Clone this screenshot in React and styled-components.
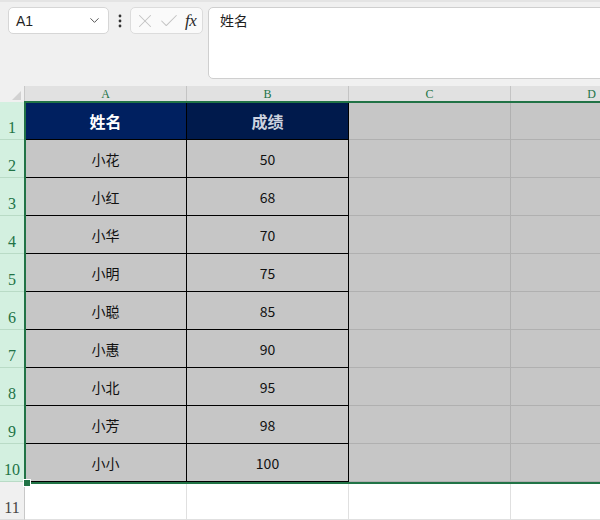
import React from "react";
import styled, { createGlobalStyle } from "styled-components";
import { ChevronDown, X, Check } from "lucide-react";

const GlobalStyle = createGlobalStyle`
  html, body {
    margin: 0;
    padding: 0;
    background: #ffffff;
    overflow: hidden;
  }
  body {
    font-family: "Liberation Sans", "Noto Sans CJK SC", sans-serif;
  }
`;

const GREEN = "#217346";

const Page = styled.div`
  width: 600px;
  height: 520px;
  overflow: hidden;
  background: #fff;
`;

const Toolbar = styled.div`
  height: 86px;
  box-sizing: border-box;
  background: #f0f0f0;
  border-top: 2px solid #e4e4e4;
  padding: 5px 0 0 8px;
  display: flex;
  align-items: flex-start;
`;

const NameBox = styled.div`
  width: 101px;
  height: 27px;
  box-sizing: border-box;
  background: #fff;
  border: 1px solid #d6d6d6;
  border-radius: 5px;
  display: flex;
  align-items: center;
  justify-content: space-between;
  padding: 0 6px 0 7px;
  font-size: 14px;
  color: #1f1f1f;
`;

const Dots = styled.div`
  width: 21px;
  height: 27px;
  display: flex;
  align-items: center;
  justify-content: center;
`;

const FormulaButtons = styled.div`
  width: 73px;
  height: 27px;
  box-sizing: border-box;
  background: #fafafa;
  border: 1px solid #dcdcdc;
  border-radius: 5px;
  display: flex;
  align-items: center;
  padding: 0 3px 0 3px;
  gap: 2px;
`;

const Fx = styled.span`
  font-family: "Liberation Serif", serif;
  font-style: italic;
  font-size: 17px;
  color: #2a2a2a;
  margin-left: 3px;
  letter-spacing: -0.5px;
`;

const FormulaBar = styled.div`
  flex: 1;
  margin-left: 5px;
  margin-right: -10px;
  height: 72px;
  box-sizing: border-box;
  background: #fff;
  border: 1px solid #cfcfcf;
  border-radius: 5px;
  padding: 2px 11px;
  font-family: "Noto Sans CJK SC", sans-serif;
  font-size: 14px;
  color: #1f1f1f;
`;

const Sheet = styled.div`
  position: relative;
  display: grid;
  grid-template-columns: 25px 162px 162px 162px 162px;
  grid-template-rows: 16px repeat(11, 38px);
`;

const Corner = styled.div`
  background: #f0f0f0;
  border-right: 1px solid #c8c8c8;
  position: relative;
  &::after {
    content: "";
    position: absolute;
    right: 3px;
    bottom: 2px;
    border-style: solid;
    border-width: 0 0 9px 9px;
    border-color: transparent transparent #d2d2d2 transparent;
  }
`;

const ColHeader = styled.div`
  background: #e1e1e1;
  border-right: 1px solid #c4c4c4;
  color: ${GREEN};
  font-family: "Liberation Serif", serif;
  font-size: 12px;
  display: flex;
  align-items: flex-end;
  justify-content: center;
  padding-bottom: 0px;
`;

const RowHeader = styled.div`
  background: ${(p) => (p.$selected ? "#d3f0e0" : "#f0f0f0")};
  border-bottom: 1px solid ${(p) => (p.$selected ? "#b9dbc6" : "#dcdcdc")};
  border-right: 1px solid #c8c8c8;
  color: ${(p) => (p.$selected ? GREEN : "#444")};
  font-family: "Liberation Serif", serif;
  font-size: 16px;
  display: flex;
  align-items: flex-end;
  justify-content: center;
  padding-bottom: 2px;
  box-sizing: border-box;
`;

const Cell = styled.div`
  box-sizing: border-box;
  background: ${(p) => p.$bg};
  border-right: 1px solid ${(p) => p.$line};
  border-bottom: 1px solid ${(p) => p.$line};
  color: ${(p) => p.$color || "#111"};
  font-family: "Noto Sans CJK SC", "Liberation Sans", sans-serif;
  font-size: ${(p) => (p.$head ? "16px" : "14px")};
  font-weight: ${(p) => (p.$head ? 700 : 400)};
  display: flex;
  align-items: center;
  justify-content: center;
`;

const Selection = styled.div`
  position: absolute;
  left: 24px;
  top: 15px;
  width: 620px;
  height: 383px;
  box-sizing: border-box;
  border: 2px solid ${GREEN};
  pointer-events: none;
`;

const FillHandle = styled.div`
  position: absolute;
  left: 23px;
  top: 393px;
  width: 6px;
  height: 6px;
  background: ${GREEN};
  border: 1px solid #fff;
`;

const rows = [
  ["小花", "50"],
  ["小红", "68"],
  ["小华", "70"],
  ["小明", "75"],
  ["小聪", "85"],
  ["小惠", "90"],
  ["小北", "95"],
  ["小芳", "98"],
  ["小小", "100"],
];

const SEL = "#c6c6c6";

export default function App() {
  return (
    <Page>
      <GlobalStyle />
      <Toolbar>
        <NameBox>
          <span>A1</span>
          <ChevronDown size={15} color="#555" strokeWidth={1.6} />
        </NameBox>
        <Dots>
          <svg width="4" height="14" viewBox="0 0 4 14">
            <circle cx="2" cy="2" r="1.4" fill="#333" />
            <circle cx="2" cy="7" r="1.4" fill="#333" />
            <circle cx="2" cy="12" r="1.4" fill="#333" />
          </svg>
        </Dots>
        <FormulaButtons>
          <X size={22} color="#c2c2c2" strokeWidth={1.1} />
          <Check size={22} color="#c2c2c2" strokeWidth={1.1} />
          <Fx>fx</Fx>
        </FormulaButtons>
        <FormulaBar>姓名</FormulaBar>
      </Toolbar>
      <Sheet>
        <Corner />
        {["A", "B", "C", "D"].map((c) => (
          <ColHeader key={c}>{c}</ColHeader>
        ))}

        <RowHeader $selected>1</RowHeader>
        <Cell $head $bg="#002060" $line="#000" $color="#fff">姓名</Cell>
        <Cell $head $bg="#001a4c" $line="#000" $color="#cdd3df">成绩</Cell>
        <Cell $bg={SEL} $line="#b0b0b0" />
        <Cell $bg={SEL} $line="#b0b0b0" />

        {rows.map(([name, score], i) => (
          <React.Fragment key={name}>
            <RowHeader $selected>{i + 2}</RowHeader>
            <Cell $bg={SEL} $line="#000">{name}</Cell>
            <Cell $bg={SEL} $line="#000">{score}</Cell>
            <Cell $bg={SEL} $line="#b0b0b0" />
            <Cell $bg={SEL} $line="#b0b0b0" />
          </React.Fragment>
        ))}

        <RowHeader>11</RowHeader>
        <Cell $bg="#fff" $line="#e0e0e0" />
        <Cell $bg="#fff" $line="#e0e0e0" />
        <Cell $bg="#fff" $line="#e0e0e0" />
        <Cell $bg="#fff" $line="#e0e0e0" />

        <Selection />
        <FillHandle />
      </Sheet>
    </Page>
  );
}
